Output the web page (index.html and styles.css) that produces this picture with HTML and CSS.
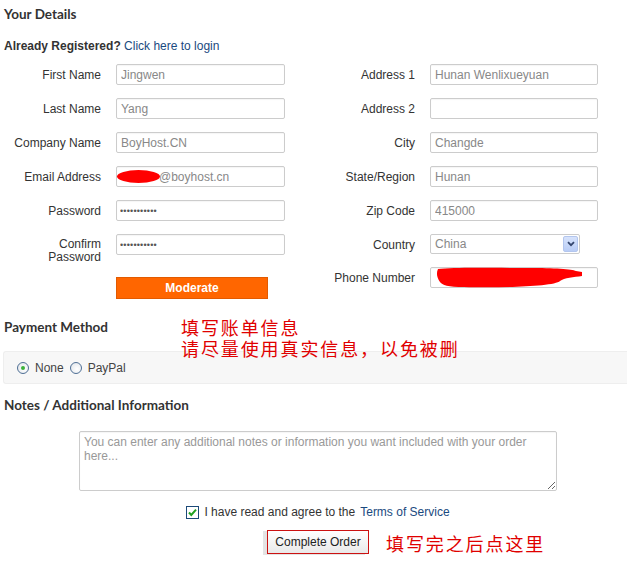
FILE: index.html
```html
<!DOCTYPE html>
<html lang="zh-CN">
<head>
    <meta charset="UTF-8">
    <meta name="viewport" content="width=device-width, initial-scale=1.0">
    <title>Checkout</title>
    <link rel="stylesheet" href="styles.css">
</head>
<body>
<div class="page">
    <h2 class="heading top">Your Details</h2>
    <p class="login"><strong>Already Registered?</strong> <a href="#">Click here to login</a></p>

    <div class="details">
        <div class="col left">
            <label>First Name</label>
            <input type="text" value="Jingwen">
            <label>Last Name</label>
            <input type="text" value="Yang">
            <label>Company Name</label>
            <input type="text" value="BoyHost.CN">
            <label>Email Address</label>
            <div class="hidden-wrap">
                <input type="text" class="email" value="@boyhost.cn">
                <span class="blot email-blot"></span>
            </div>
            <label>Password</label>
            <input type="text" class="pw" value="•••••••••••">
            <label class="two-line">Confirm<br>Password</label>
            <input type="text" class="pw" value="•••••••••••">
            <span></span>
            <button class="strength">Moderate</button>
        </div>

        <div class="col right">
            <label>Address 1</label>
            <input type="text" value="Hunan Wenlixueyuan">
            <label>Address 2</label>
            <input type="text" value="">
            <label>City</label>
            <input type="text" value="Changde">
            <label>State/Region</label>
            <input type="text" value="Hunan">
            <label>Zip Code</label>
            <input type="text" value="415000">
            <label>Country</label>
            <div class="select">
                <span class="select-value">China</span>
                <span class="select-btn">
                    <svg width="8" height="6" viewBox="0 0 8 6"><path d="M1 1.2 L4 4.2 L7 1.2" fill="none" stroke="#34466e" stroke-width="1.8"/></svg>
                </span>
            </div>
            <label>Phone Number</label>
            <div class="hidden-wrap">
                <input type="text" value="">
                <svg class="phone-blot" width="150" height="21" viewBox="0 0 150 21">
                    <path d="M4 2 C20 0 60 1 95 1 C120 1 138 2 142 4 L148 5 L148 9 C140 10 130 11 126 14 C120 20 60 21 30 20 C14 20 8 18 6 15 C3 11 2 6 4 2 Z" fill="#ff0000"/>
                </svg>
            </div>
        </div>
    </div>

    <h2 class="heading pay">Payment Method</h2>
    <div class="payment">
        <span class="radio checked"></span><span class="radio-label">None</span>
        <span class="radio"></span><span class="radio-label">PayPal</span>
    </div>

    <h2 class="heading notes">Notes / Additional Information</h2>
    <div class="bottom">
        <textarea placeholder="You can enter any additional notes or information you want included with your order here..."></textarea>
        <p class="agree">
            <span class="check">
                <svg width="11" height="11" viewBox="0 0 11 11"><path d="M2 5.5 L4.3 8 L9 2.6" fill="none" stroke="#21a121" stroke-width="2"/></svg>
            </span>
            I have read and agree to the <a href="#">Terms of Service</a>
        </p>
        <div class="submit-row">
            <button class="complete">Complete Order</button>
            <span class="note note-submit">填写完之后点这里</span>
        </div>
    </div>

    <!-- annotation -->
    <div class="note note-bill">填写账单信息<br>请尽量使用真实信息，以免被删</div>
</div>
</body>
</html>
```

FILE: styles.css
```css
body {
    margin: 0;
    font-family: "Liberation Sans", Arial, sans-serif;
    font-size: 12px;
    color: #333;
    background: #fff;
}
.page {
    position: relative;
    padding-left: 4px;
    height: 567px;
}
.heading {
    margin: 0;
    font-family: Lato, "Open Sans", sans-serif;
    font-size: 13.5px;
    font-weight: 700;
    line-height: 16px;
    color: #333;
}
.heading.top {
    padding-top: 6px;
}
.login {
    margin: 17px 0 0;
    line-height: 14px;
}
.login strong {
    color: #333;
}
a {
    color: #1a4a80;
    text-decoration: none;
}
.details {
    display: flex;
    align-items: flex-start;
    gap: 15px;
    margin-top: 11px;
}
.col {
    display: grid;
    column-gap: 15px;
    row-gap: 13px;
    align-items: start;
    align-content: start;
}
.col.left {
    grid-template-columns: 97px 169px;
}
.col.right {
    grid-template-columns: 115px 168px;
}
.col label {
    text-align: right;
    padding-top: 5px;
    line-height: 13px;
    color: #333;
}
.col label.two-line {
    padding-top: 4px;
}
input, textarea {
    font-family: "Liberation Sans", Arial, sans-serif;
    font-size: 12px;
    color: #888;
    box-sizing: border-box;
    border: 1px solid #ccc;
    border-radius: 2px;
    box-shadow: inset 0 1px 1px rgba(0, 0, 0, 0.04);
    outline: none;
}
input {
    width: 100%;
    height: 21px;
    padding: 0 4px;
    margin: 0;
}
input.pw {
    font-size: 9px;
    letter-spacing: 0.2px;
    padding-left: 3px;
    color: #555;
}
.hidden-wrap {
    position: relative;
}
input.email {
    padding-left: 42px;
}
.blot {
    position: absolute;
    background: #ff0000;
}
.email-blot {
    left: 1px;
    top: 4px;
    width: 43px;
    height: 13px;
    border-radius: 50%;
}
.phone-blot {
    position: absolute;
    left: 4px;
    top: 0;
}
.strength {
    width: 152px;
    height: 22px;
    background: #ff6600;
    border: 1px solid #e25a00;
    color: #fff;
    font-family: "Liberation Sans", Arial, sans-serif;
    font-size: 12px;
    font-weight: bold;
    padding: 0;
    cursor: pointer;
}
.select {
    position: relative;
    width: 150px;
    height: 20px;
    box-sizing: border-box;
    border: 1px solid #ccc;
    border-radius: 2px;
    color: #888;
}
.select-value {
    display: block;
    padding-left: 4px;
    line-height: 18px;
}
.select-btn {
    position: absolute;
    right: 1px;
    top: 1px;
    width: 15px;
    height: 16px;
    box-sizing: border-box;
    border: 1px solid #b3c6ee;
    border-radius: 2px;
    background: linear-gradient(#d7e3fc, #b9cdf6);
    display: flex;
    align-items: center;
    justify-content: center;
}
.heading.pay {
    margin-top: 20px;
}
.payment {
    display: flex;
    align-items: center;
    margin: 16px 0 0 -1px;
    height: 33px;
    box-sizing: border-box;
    padding-left: 13px;
    background: #f7f7f7;
    border: 1px solid #eeeeee;
    border-right: none;
    border-radius: 3px 0 0 3px;
}
.radio {
    width: 12px;
    height: 12px;
    box-sizing: border-box;
    border: 1px solid #4f6f95;
    border-radius: 50%;
    background: radial-gradient(circle at 60% 60%, #fff, #dfe3e8);
    display: flex;
    align-items: center;
    justify-content: center;
}
.radio.checked::after {
    content: "";
    width: 4px;
    height: 4px;
    border-radius: 50%;
    background: #3bb13b;
}
.radio-label {
    margin: 0 6px 0 6px;
    color: #444;
}
.heading.notes {
    margin-top: 13px;
}
.bottom {
    margin-left: 75px;
    width: 478px;
    text-align: center;
}
textarea {
    display: block;
    width: 478px;
    height: 60px;
    margin-top: 18px;
    padding: 3px 4px;
    line-height: 14px;
    resize: vertical;
}
textarea::placeholder {
    color: #999;
}
.agree {
    margin: 14px 0 0;
    line-height: 14px;
    color: #333;
    display: flex;
    align-items: center;
    justify-content: center;
    gap: 5px;
}
.check {
    width: 13px;
    height: 13px;
    box-sizing: border-box;
    border: 1px solid #1c4a78;
    background: #fff;
    display: flex;
    align-items: center;
    justify-content: center;
}
.submit-row {
    position: relative;
    margin-top: 11px;
}
.complete {
    height: 24px;
    padding: 0 7px;
    font-family: "Liberation Sans", Arial, sans-serif;
    font-size: 12px;
    color: #222;
    background: linear-gradient(#ffffff, #e9e9e9);
    border: 1px solid #cc1111;
    border-radius: 0;
    box-shadow: -4px 1px 0 #e4e4e4;
    cursor: pointer;
}
.note {
    font-family: "Noto Sans CJK SC", sans-serif;
    font-size: 18px;
    letter-spacing: 1.9px;
    color: #e00000;
    line-height: 21px;
    white-space: nowrap;
}
.note-bill {
    position: absolute;
    left: 181px;
    top: 317px;
}
.note-submit {
    position: absolute;
    left: 307px;
    top: 3px;
}
```
